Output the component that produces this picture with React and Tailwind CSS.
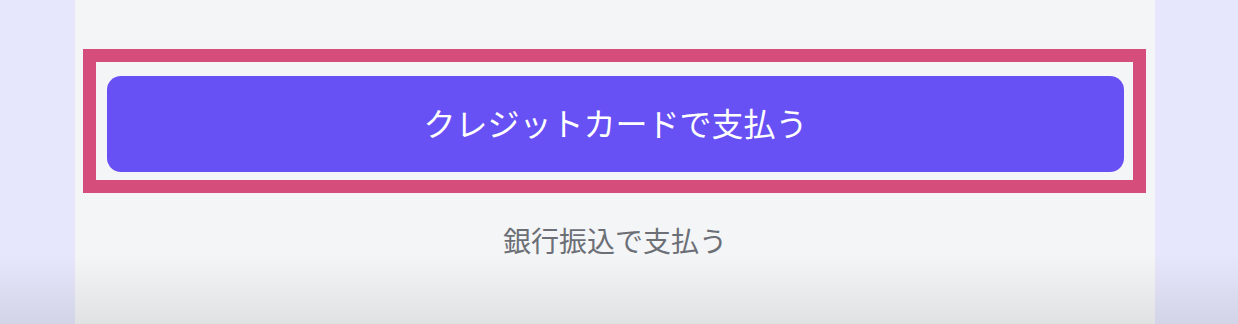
const fontJa = "font-['Noto_Sans_CJK_JP','Noto_Sans',sans-serif]";

export default function App() {
  return (
    <div className={`relative flex h-[324px] w-full overflow-hidden ${fontJa}`}>
      <aside className="w-[75px] shrink-0 bg-[#e6e6fc]" />

      <main className="flex flex-1 flex-col items-stretch bg-[#f4f5f7] pt-[49px]">
        <div className="ml-[8px] mr-[9px] border-[13px] border-[#d44d7b] pt-[14px] pr-[9px] pb-[8px] pl-[11px]">
          <button
            type="button"
            className="flex h-[96px] w-full items-center justify-center rounded-[14px] bg-[#6751f5] pb-[5px] text-[32px] leading-none text-white"
          >
            クレジットカードで支払う
          </button>
        </div>

        <button
          type="button"
          className="mt-[27px] self-center text-[28px] leading-[40px] text-[#6c6f76]"
        >
          銀行振込で支払う
        </button>
      </main>

      <aside className="w-[83px] shrink-0 bg-[#e6e6fc]" />

      {/* bottom fade over everything */}
      <div className="pointer-events-none absolute inset-x-0 bottom-0 h-[70px] bg-gradient-to-b from-transparent to-black/[0.08]" />
    </div>
  );
}
